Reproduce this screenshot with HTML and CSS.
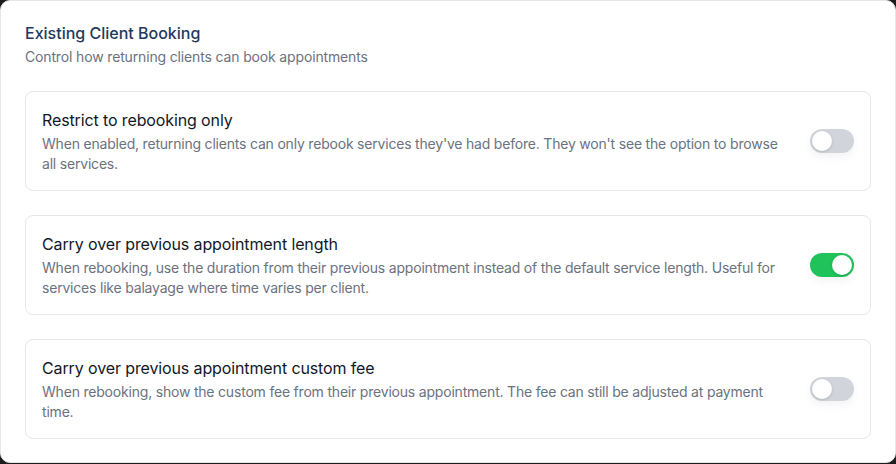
FILE: index.html
```html
<!DOCTYPE html>
<html>
<head>
<meta charset="utf-8">
<link rel="stylesheet" href="styles.css">
</head>
<body>
<div class="card">
  <h2 class="title">Existing Client Booking</h2>
  <p class="subtitle">Control how returning clients can book appointments</p>
  <div class="list">
    <div class="item">
      <div class="text">
        <div class="item-title">Restrict to rebooking only</div>
        <div class="item-desc">When enabled, returning clients can only rebook services they've had before. They won't see the option to browse all services.</div>
      </div>
      <span class="toggle"><span class="knob"></span></span>
    </div>
    <div class="item">
      <div class="text">
        <div class="item-title">Carry over previous appointment length</div>
        <div class="item-desc">When rebooking, use the duration from their previous appointment instead of the default service length. Useful for services like balayage where time varies per client.</div>
      </div>
      <span class="toggle on"><span class="knob"></span></span>
    </div>
    <div class="item">
      <div class="text">
        <div class="item-title">Carry over previous appointment custom fee</div>
        <div class="item-desc">When rebooking, show the custom fee from their previous appointment. The fee can still be adjusted at payment time.</div>
      </div>
      <span class="toggle"><span class="knob"></span></span>
    </div>
  </div>
</div>
</body>
</html>
```
FILE: styles.css
```css
html, body {
  margin: 0;
  padding: 0;
  background: #1c1c1c;
}
body {
  font-family: Inter, "Noto Sans", sans-serif;
  width: 896px;
  height: 464px;
}
.card {
  box-sizing: border-box;
  width: 896px;
  height: 463px;
  background: #fff;
  border: 1px solid #e5e7eb;
  border-radius: 10px;
  padding: 20px 24px 24px;
}
.title {
  margin: 0;
  font-size: 16px;
  line-height: 24px;
  font-weight: 500;
  color: #1e3a5f;
}
.subtitle {
  margin: 2px 0 0;
  font-size: 14px;
  line-height: 20px;
  color: #6b7280;
  letter-spacing: -0.15px;
}
.list {
  margin-top: 24px;
  display: flex;
  flex-direction: column;
  gap: 24px;
}
.item {
  display: flex;
  align-items: center;
  gap: 32px;
  border: 1px solid #e5e7eb;
  border-radius: 8px;
  padding: 16px;
}
.text {
  flex: 1;
}
.item-title {
  font-size: 16px;
  line-height: 24px;
  font-weight: 400;
  color: #111827;
  letter-spacing: -0.12px;
}
.item-desc {
  margin-top: 2px;
  font-size: 14px;
  line-height: 20px;
  color: #6b7280;
  letter-spacing: -0.2px;
}
.toggle {
  flex: none;
  position: relative;
  width: 44px;
  height: 24px;
  border-radius: 12px;
  background: #d1d5db;
  box-shadow: 0 4px 10px rgba(0,0,0,0.05);
}
.toggle.on {
  background: #1fc35a;
}
.knob {
  position: absolute;
  top: 2px;
  left: 2px;
  width: 20px;
  height: 20px;
  border-radius: 50%;
  background: #fff;
  box-shadow: 0 1px 3px rgba(0,0,0,0.15);
}
.toggle.on .knob {
  left: 22px;
}
```
